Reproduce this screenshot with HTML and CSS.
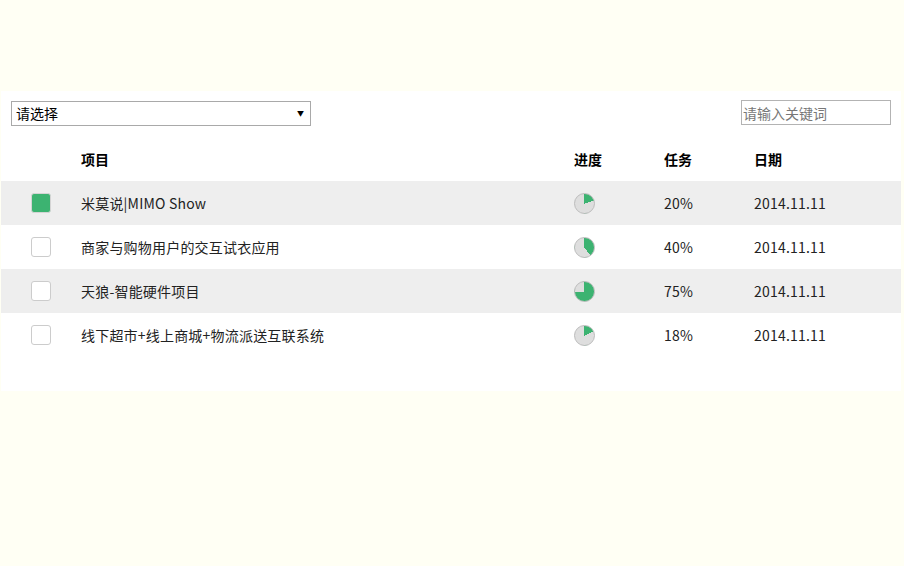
FILE: index.html
```html
<!DOCTYPE html>
<html lang="zh">
<head>
<meta charset="utf-8">
<title>项目列表</title>
<link rel="stylesheet" href="styles.css">
</head>
<body>
<div class="panel">
  <div class="toolbar">
    <div class="select-wrap">
      <div class="select">请选择</div>
      <span class="arrow">▼</span>
    </div>
    <input class="search" type="text" placeholder="请输入关键词">
  </div>
  <table class="list">
    <thead>
      <tr>
        <th class="c-check"></th>
        <th class="c-name">项目</th>
        <th class="c-prog">进度</th>
        <th class="c-task">任务</th>
        <th class="c-date">日期</th>
      </tr>
    </thead>
    <tbody>
      <tr class="odd">
        <td class="c-check"><span class="box checked"></span></td>
        <td class="c-name">米莫说|MIMO Show</td>
        <td class="c-prog"><span class="pie" style="--p:20%"></span></td>
        <td class="c-task">20%</td>
        <td class="c-date">2014.11.11</td>
      </tr>
      <tr>
        <td class="c-check"><span class="box"></span></td>
        <td class="c-name">商家与购物用户的交互试衣应用</td>
        <td class="c-prog"><span class="pie" style="--p:40%"></span></td>
        <td class="c-task">40%</td>
        <td class="c-date">2014.11.11</td>
      </tr>
      <tr class="odd">
        <td class="c-check"><span class="box"></span></td>
        <td class="c-name">天狼-智能硬件项目</td>
        <td class="c-prog"><span class="pie" style="--p:75%"></span></td>
        <td class="c-task">75%</td>
        <td class="c-date">2014.11.11</td>
      </tr>
      <tr>
        <td class="c-check"><span class="box"></span></td>
        <td class="c-name">线下超市+线上商城+物流派送互联系统</td>
        <td class="c-prog"><span class="pie" style="--p:18%"></span></td>
        <td class="c-task">18%</td>
        <td class="c-date">2014.11.11</td>
      </tr>
    </tbody>
  </table>
</div>
</body>
</html>
```
FILE: styles.css
```css
html, body {
  margin: 0;
  padding: 0;
  background: #fffff4;
}
body {
  font-family: "Noto Sans CJK SC", "Noto Sans", sans-serif;
  font-size: 14px;
  color: #222;
}
.panel {
  width: 900px;
  margin: 91px 0 0 1px;
  padding: 9px 0 34px 0;
  background: #fff;
}
.toolbar {
  display: flex;
  justify-content: space-between;
  align-items: flex-start;
  padding: 0 10px;
  height: 26px;
}
.select-wrap {
  position: relative;
  margin-top: 1px;
}
.select {
  box-sizing: border-box;
  width: 300px;
  height: 25px;
  border: 1px solid #a9a9a9;
  padding: 0 0 0 4px;
  line-height: 22px;
  font-size: 14px;
  color: #000;
}
.arrow {
  position: absolute;
  right: 7px;
  top: 7px;
  font-size: 7px;
  color: #000;
  line-height: 10px;
}
.search {
  box-sizing: border-box;
  width: 150px;
  height: 25px;
  border: 1px solid #b3b3b3;
  padding: 0 1px;
  font-family: "Noto Sans CJK SC", sans-serif;
  font-size: 14px;
  outline: none;
  margin: 0;
}
.search::placeholder {
  color: #777;
}
.list {
  margin-top: 11px;
  width: 900px;
  border-collapse: collapse;
  table-layout: fixed;
}
.list th, .list td {
  height: 44px;
  padding: 0;
  text-align: left;
  vertical-align: middle;
  line-height: 20px;
}
.list th {
  font-weight: bold;
  color: #000;
}
.list td {
  color: #222;
  letter-spacing: 0.2px;
}
.list tr.odd td {
  background: #eeeeee;
}
.c-check { width: 80px; text-align: center !important; }
.c-name { width: 493px; }
.c-prog { width: 90px; }
.c-task { width: 90px; }
.c-date { width: 147px; }
.box {
  display: block;
  box-sizing: border-box;
  width: 20px;
  height: 20px;
  margin: 0 0 0 30px;
  border: 1px solid #ccc;
  border-radius: 3px;
  background: #fff;
}
.box.checked {
  background: #3cb371;
  border-color: #d4d4d4;
}
.pie {
  display: block;
  box-sizing: border-box;
  width: 21px;
  height: 21px;
  border-radius: 50%;
  border: 1px solid #bcbcbc;
  background: conic-gradient(#3cb371 0 var(--p), #dedede var(--p) 100%);
}
```
